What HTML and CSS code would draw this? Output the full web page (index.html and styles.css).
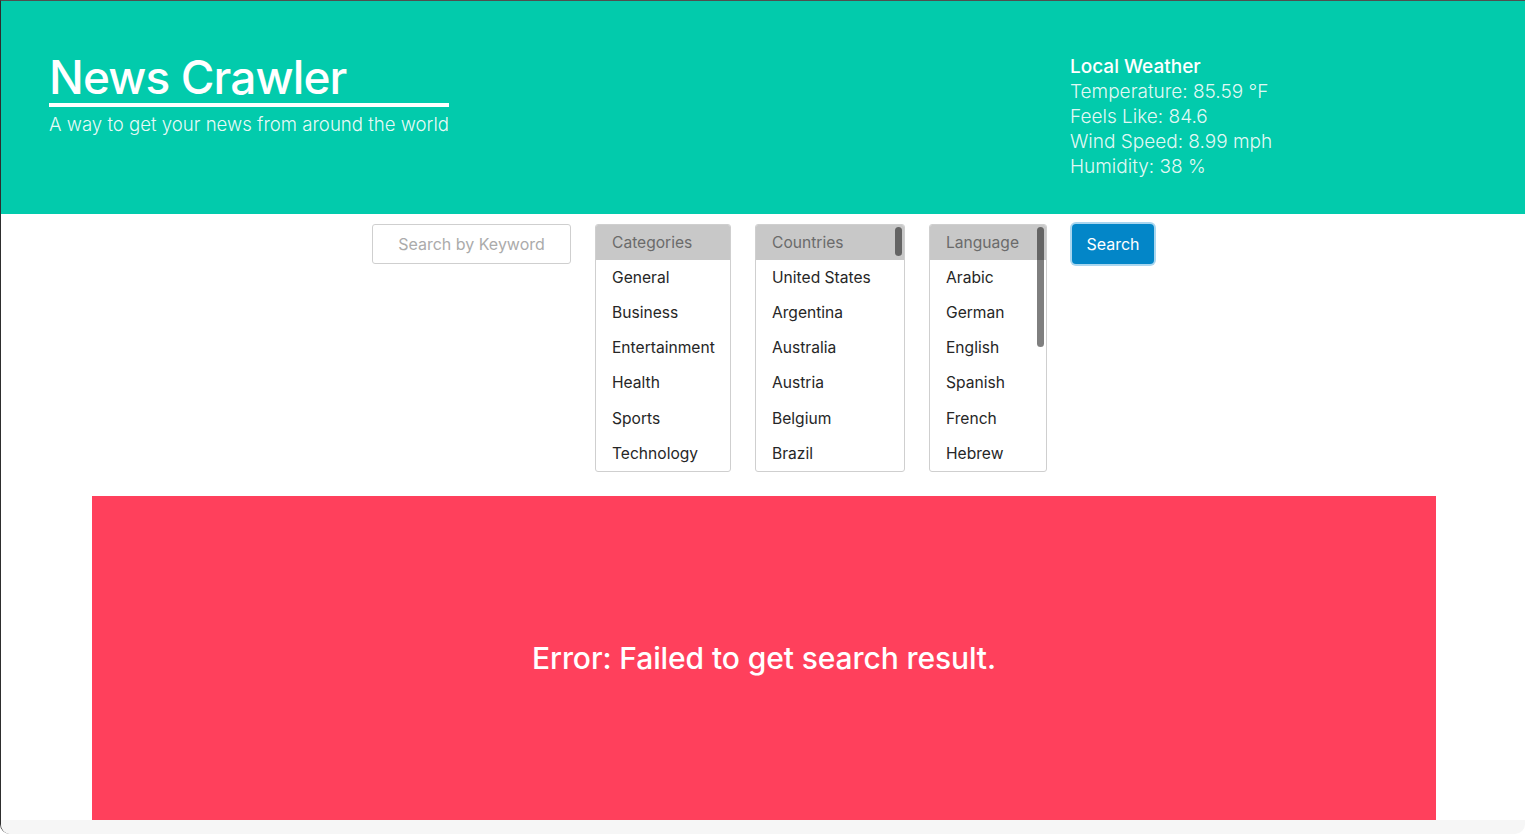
FILE: index.html
```html
<!DOCTYPE html>
<html lang="en">
<head>
<meta charset="utf-8">
<title>News Crawler</title>
<link rel="stylesheet" href="styles.css">
</head>
<body>
<div class="window">
  <header class="hero">
    <div class="brand">
      <h1 class="brand-title">News Crawler</h1>
      <p class="brand-tagline">A way to get your news from around the world</p>
    </div>
    <div class="weather">
      <div class="weather-title">Local Weather</div>
      <div class="weather-line">Temperature: 85.59 °F</div>
      <div class="weather-line">Feels Like: 84.6</div>
      <div class="weather-line">Wind Speed: 8.99 mph</div>
      <div class="weather-line">Humidity: 38 %</div>
    </div>
  </header>
  <main class="content">
    <div class="search-row">
      <div class="keyword">Search by Keyword</div>
      <div class="listbox listbox-categories">
        <div class="listbox-head">Categories</div>
        <div class="listbox-item">General</div>
        <div class="listbox-item">Business</div>
        <div class="listbox-item">Entertainment</div>
        <div class="listbox-item">Health</div>
        <div class="listbox-item">Sports</div>
        <div class="listbox-item">Technology</div>
      </div>
      <div class="listbox listbox-countries">
        <div class="listbox-head">Countries</div>
        <div class="listbox-item">United States</div>
        <div class="listbox-item">Argentina</div>
        <div class="listbox-item">Australia</div>
        <div class="listbox-item">Austria</div>
        <div class="listbox-item">Belgium</div>
        <div class="listbox-item">Brazil</div>
        <span class="thumb thumb-countries"></span>
      </div>
      <div class="listbox listbox-language">
        <div class="listbox-head">Language</div>
        <div class="listbox-item">Arabic</div>
        <div class="listbox-item">German</div>
        <div class="listbox-item">English</div>
        <div class="listbox-item">Spanish</div>
        <div class="listbox-item">French</div>
        <div class="listbox-item">Hebrew</div>
        <span class="thumb thumb-language"></span>
      </div>
      <button class="search-btn" type="button">Search</button>
    </div>
    <section class="error-panel">
      <p class="error-text">Error: Failed to get search result.</p>
    </section>
  </main>
  <div class="statusbar"></div>
</div>
</body>
</html>
```

FILE: styles.css
```css
* { box-sizing: border-box; }

html, body {
  margin: 0;
  padding: 0;
  background: #ffffff;
}

body {
  font-family: Inter, "Noto Sans", "Liberation Sans", sans-serif;
  color: #222;
}

.window {
  height: 834px;
  display: flex;
  flex-direction: column;
  border-top: 1px solid #4f4f4f;
  border-left: 1px solid #2e2e2e;
  border-bottom-left-radius: 10px;
  border-bottom-right-radius: 10px;
  overflow: hidden;
  background: #ffffff;
}

/* Header */
.hero {
  height: 213px;
  flex-shrink: 0;
  background: #02cbac;
  color: #ffffff;
  display: grid;
  grid-template-columns: 1020px 1fr;
  padding: 50px 0 0 49px;
}

.brand {
  width: 399px;
}

.brand-title {
  margin: 0 0 0 -1px;
  font-size: 46px;
  line-height: 52px;
  font-weight: 500;
  letter-spacing: -0.9px;
  border-bottom: 4px solid #ffffff;
  padding-left: 0;
}

.brand-tagline {
  margin: 5px 0 0 -1px;
  font-size: 18.6px;
  line-height: 24px;
  font-weight: 300;
  white-space: nowrap;
  color: rgba(255, 255, 255, 0.92);
}

.weather {
  margin-top: 3px;
  font-size: 19px;
  line-height: 25px;
}

.weather-title {
  font-weight: 500;
}

.weather-line {
  font-weight: 300;
  color: rgba(255, 255, 255, 0.9);
}

/* Content */
.content {
  flex: 1;
  min-height: 0;
  overflow: hidden;
}

.search-row {
  display: flex;
  justify-content: center;
  align-items: flex-start;
  gap: 24px;
  margin-top: 10px;
}

.keyword {
  width: 199px;
  height: 40px;
  border: 1px solid #cfcfcf;
  border-radius: 3px;
  display: flex;
  align-items: center;
  justify-content: center;
  font-size: 16px;
  color: #ababab;
}

.listbox {
  position: relative;
  height: 248px;
  border: 1px solid #cfcfcf;
  border-radius: 3px;
  overflow: hidden;
  font-size: 15.6px;
  color: #262626;
}

.listbox-categories { width: 136px; }
.listbox-countries { width: 150px; }
.listbox-language { width: 118px; }

.listbox-head,
.listbox-item {
  height: 35.1px;
  display: flex;
  align-items: center;
  padding: 0 0 0 16px;
  white-space: nowrap;
}

.listbox-head {
  background: #c8c8c8;
  color: #6b6b6b;
}

.thumb {
  position: absolute;
  top: 2px;
  right: 2px;
  width: 7px;
  border-radius: 4px;
  background: rgba(0, 0, 0, 0.5);
}

.thumb-countries { height: 29px; }
.thumb-language { height: 120px; }

.search-btn {
  width: 82px;
  height: 40px;
  margin-left: 1px;
  border: none;
  border-radius: 4px;
  background: #0386c8;
  color: #ffffff;
  font-family: inherit;
  font-size: 16px;
  box-shadow: 0 0 0 2px #a9d6ef;
  padding: 0;
}

.error-panel {
  margin: 24px 0 0 91px;
  width: 1344px;
  height: 326px;
  background: #ff405c;
  display: flex;
  align-items: center;
  justify-content: center;
}

.error-text {
  margin: 0 0 2px;
  color: #ffffff;
  font-size: 30px;
  font-weight: 500;
  letter-spacing: -0.1px;
}

.statusbar {
  height: 14px;
  flex-shrink: 0;
  background: #f6f6f6;
}
```
